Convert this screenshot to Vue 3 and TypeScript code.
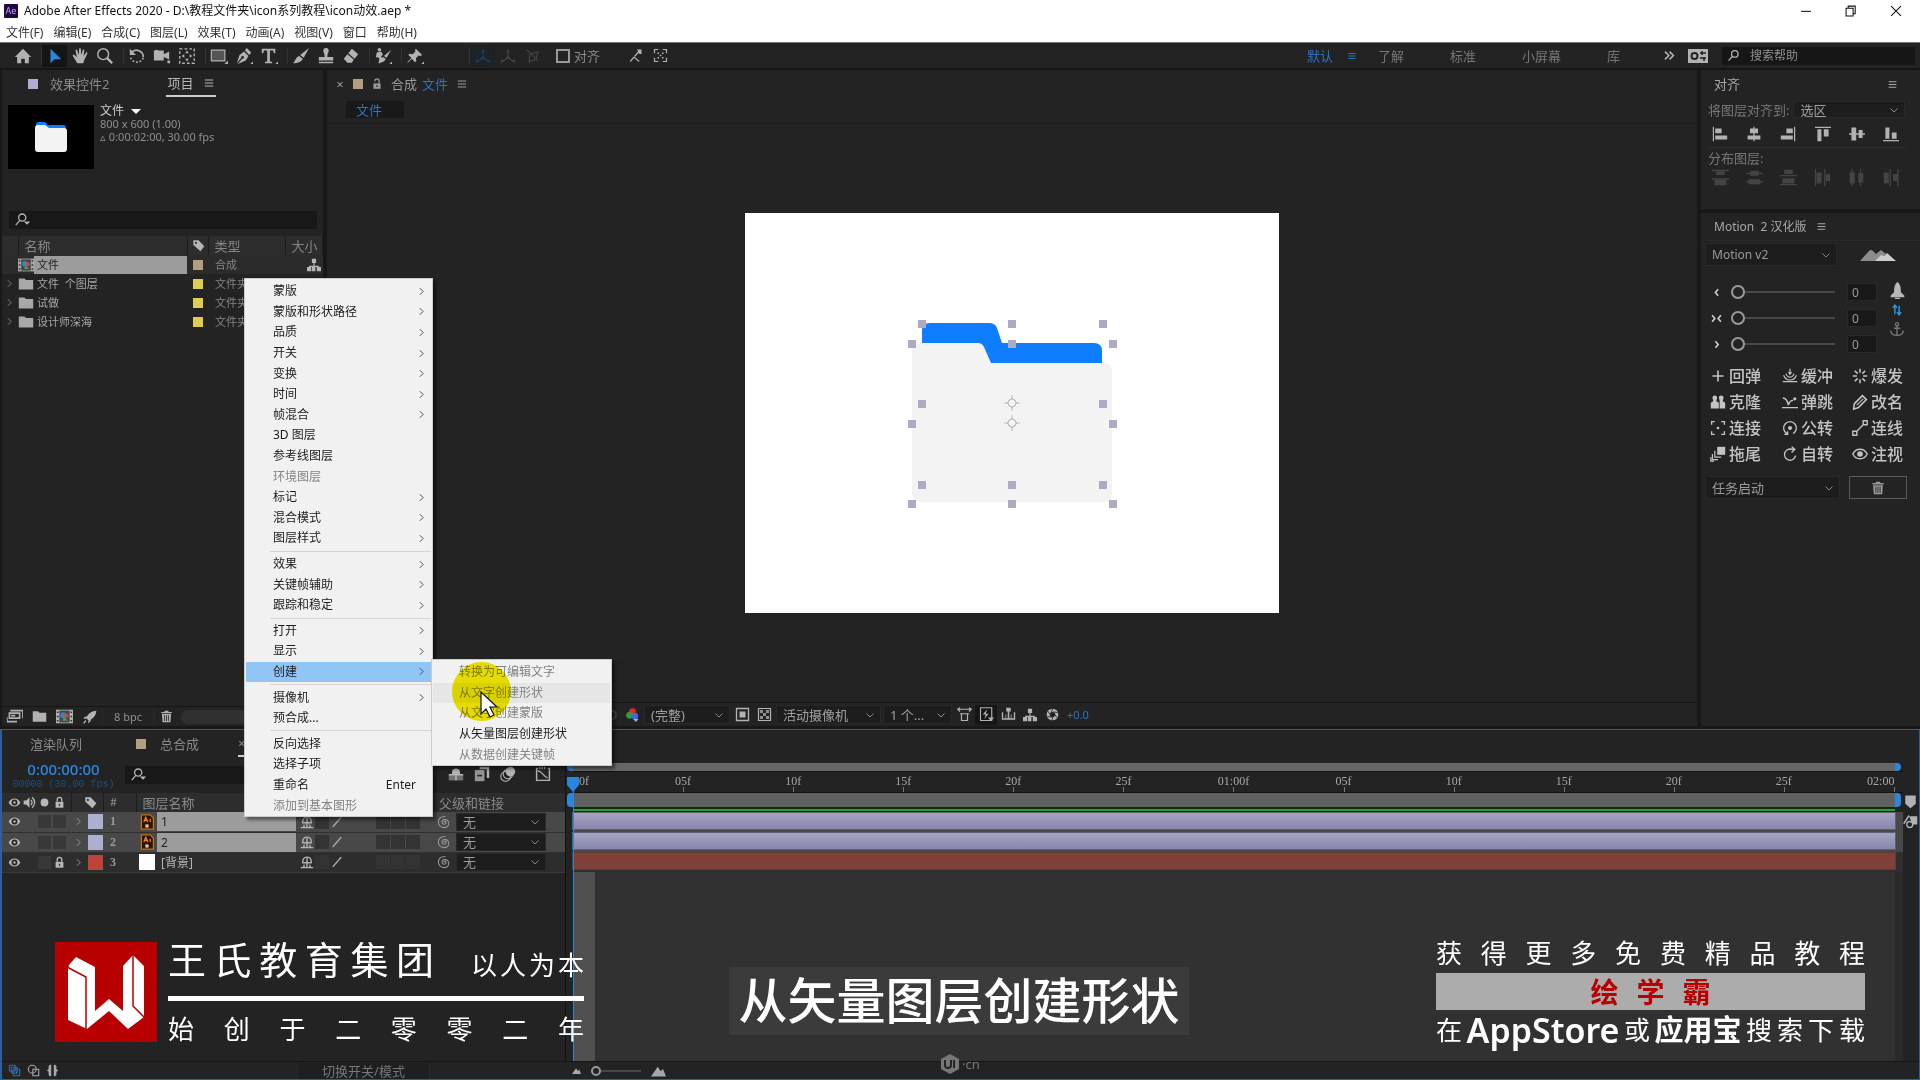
<script setup lang="ts">
import { h, ref } from 'vue'

const shapes: Record<string, string> = {
  home: '<path d="M10 2 1 11h2.500v7H8v-5h4v5h4.500v-7H19z"/>',
  select: '<path d="M5 2v16l4.500-4.500H17z"/>',
  hand: '<path d="M7 18 2 10c-.5-1.500 1-2 2-1l2.500 2.500L5 4c0-1.500 1.600-1.500 2 0l1.500 5L9 2.500c0-1.500 2-1.500 2 0l.3 6.500L13 3.500c.4-1.300 2-1 1.800.4L14 10l2.600-3.600c.8-1 2-.3 1.600.8L15 14l-1.500 4z"/>',
  zoom: '<g fill="none" stroke="currentColor"><circle cx="8" cy="8" r="6" stroke-width="1.600"/><path d="m12 12 6 6" stroke-width="2.600"/></g>',
  rotate: '<g fill="none" stroke="currentColor" stroke-width="1.800"><path d="M4 6a7.500 7.500 0 0 1 13 5"/><path d="M17 12A7.500 7.500 0 0 1 3 12" stroke-dasharray="2 2"/></g><path d="M2 2v7h7z"/>',
  camera: '<path d="M1 4h11v4l6-3v9l-6-3v4H1zM16 15h3v3h-3z"/><circle cx="4" cy="5" r="2"/>',
  pan: '<g fill="none" stroke="currentColor" stroke-width="1.500"><rect x="2" y="2" width="16" height="16" stroke-dasharray="3 2.300"/></g><path d="m10 4 2 3H8zM10 16l2-3H8zM4 10l3-2v4zM16 10l-3-2v4z"/>',
  rect: '<path d="M1.500 3.500h15v12h-15z" fill="#555" stroke="currentColor" stroke-width="1.300"/><path d="M20 15v4h-4z"/>',
  pen: '<path d="m13 1 5 5-2 3-5-5zM10 5l5 5-3 5-9 4 5-6a1.500 1.500 0 1 0-1-1l-5 6 3-9zM20 16v3h-3z"/>',
  type: '<path d="M2 2h15v5h-1.500L14.500 4H11v12l2.500.5V18h-8v-1.500L8 16V4H4.500l-1 3H2zM20 16v3h-3z"/>',
  brush: '<path d="m19 1-6 11-4-3zM8 10l4 3c-2 4-6 5-11 5 3-2 3-7 7-8z"/>',
  stamp: '<path d="M7 4a3 3 0 1 1 6 0c0 2-1.500 3-1.500 7H18v4H2v-4h6.500C8.500 7 7 6 7 4zM2 16.500h16V18H2z"/>',
  eraser: '<path d="m11 2 7 6-4 5-7-6zM6 8l7 6-2 3.500H6L2 13z"/>',
  roto: '<circle cx="6" cy="3" r="2"/><path d="m3 6 5-1 2 4-2 1 1 3-2 5H5l1-5-2-2-2 1zM19 3l-5 9-3-2zM10 11l3 2c-1 3-3 4-6 4 2-2 1-5 3-6zM20 16v3h-3z"/>',
  pin: '<path d="m11 2 7 7-2 1-2-.5-3 3 .5 3L10 17l-3.500-4L2 17.500l-.5-.5L6 12 2.500 9 4 7.500l3.500.5 3-3L10 3zM20 16v3h-3z"/>',
  axis: '<g fill="none" stroke="currentColor" stroke-width="1.500"><path d="M10 4v8m0 0-7 5m7-5 7 5"/></g><path d="m10 1 2 4H8zM1 18l1-4 3 3zM19 18l-1-4-3 3z"/><circle cx="10" cy="12" r="2"/>',
  axisview: '<g fill="none" stroke="currentColor" stroke-width="1.500"><path d="M2 2 16 16M6 8l10-3-2 9-9 3z"/></g>',
  edge: '<g fill="none" stroke="currentColor" stroke-width="1.600"><path d="M3 18 8 12l7 6M9 11l6-7"/></g><path d="M12 2h6v6h-3z"/>',
  corners: '<path d="M2 7V2h5M13 2h5v5M18 13v5h-5M7 18H2v-5" fill="none" stroke="currentColor" stroke-width="1.600"/><path d="M6 6h2v2H6zM12 6h2v2h-2zM6 12h2v2H6zM12 12h2v2h-2zM9 9h2v2H9z"/>',
  more: '<path d="m3 4 6 6-6 6M10 4l6 6-6 6" fill="none" stroke="currentColor" stroke-width="2.500"/>',
  workspace: '<path d="M0 3h20v14H0z"/><circle cx="6.500" cy="10" r="3" fill="none" stroke="#232323" stroke-width="2"/><path d="M12 7h6M12 12h6M14 5v4M16 11v4" stroke="#232323" stroke-width="1.500"/>',
  search: '<g fill="none" stroke="currentColor" stroke-width="2"><circle cx="12" cy="7.500" r="5"/><path d="m8.500 11-6 7"/></g>',
  searchdrop: '<g fill="none" stroke="currentColor" stroke-width="1.600"><circle cx="9" cy="7" r="4.500"/><path d="m6 10.500-5 6"/></g><path d="M11 12h8l-4 4z"/>',
  burger: '<path d="M3 4h14v2H3zM3 9h14v2H3zM3 14h14v2H3z"/>',
  lock: '<path d="M4 9h12v9H4z"/><path d="M6.500 9V5.500a3.500 3.500 0 0 1 7 0V9" fill="none" stroke="currentColor" stroke-width="2"/><path d="M9 12h2v3H9z" fill="#232323"/>',
  unlock: '<path d="M4 9h12v9H4z"/><path d="M6.500 6V5a3.500 3.500 0 0 1 7 0v4" fill="none" stroke="currentColor" stroke-width="2"/><path d="M9 12h2v3H9z" fill="#232323"/>',
  tag: '<path d="M2 2h8l9 9-6 8L2 9z"/><circle cx="6" cy="6" r="1.600" fill="#2d2d2d"/>',
  folder: '<path d="M1 3h7l2 2h9v12H1z"/>',
  comp: '<path d="M0 2h20v16H0z"/><path d="M4 3h12v14H4z" fill="#444"/><circle cx="8.500" cy="8.500" r="3.500" fill="#3987b8"/><circle cx="12.500" cy="9" r="2.500" fill="#c64b3c"/><path d="m7 15 3-5 4 5z" fill="#4d9a56"/><path d="M1 4h2v2H1zM1 9h2v2H1zM1 14h2v2H1zM17 4h2v2h-2zM17 9h2v2h-2zM17 14h2v2h-2z" fill="#333"/>',
  flow: '<path d="M7 1h6v6H7zM0 13h6v6H0zM14 13h6v6h-6zM7 13h5v6H7zM9.200 7h1.600v4H17v2H3v-2h6.200z"/>',
  chev: '<path d="m7 4 6 6-6 6" fill="none" stroke="currentColor" stroke-width="1.700"/>',
  down: '<path d="m3 7 7 7 7-7" fill="none" stroke="currentColor" stroke-width="1.700"/>',
  interpret: '<path d="M5 2h15v10h-1V4H5z"/><path fill-rule="evenodd" d="M3 5h14v8H3zm2 2v4h10V7zM1 11h1v4h11v2H1z"/><path d="M6 8h5v2H6z"/>',
  rocketside: '<path d="M19 1C13 1 8 5 6 9l-4 1-1 3 4-1 3 3-1 4 3-2 2-4c4-2 7-7 7-12z"/><path d="m4 15-3 4" stroke="currentColor" stroke-width="2"/>',
  trash: '<path d="M7 1h6v2h5v2H2V3h5zM3 6h14l-1 13H4z"/><path d="M7 8v9M10 8v9M13 8v9" stroke="#232323" stroke-width="1.300"/>',
  eye: '<path d="M1 10c4-8 14-8 18 0-4 8-14 8-18 0z"/><circle cx="10" cy="10" r="4.500" fill="#262626"/><circle cx="10" cy="10" r="1.800"/>',
  speaker: '<path d="M1 7h4l5-5v16l-5-5H1z"/><path d="M12 6q4 4 0 8M14 2q8 8 0 16" fill="none" stroke="currentColor" stroke-width="2"/>',
  dot: '<circle cx="10" cy="10" r="6"/>',
  shy: '<path d="M4 9a6 6 0 0 1 12 0v2H4z" fill="none" stroke="currentColor" stroke-width="2"/><path d="M9 4h2v15H9zM1 17h18v2H1zM6 12l-2 5h3zM14 12l2 5h-3z"/>',
  hide: '<path d="M1 11h18v7H1z" opacity=".55"/><path d="M5 8a5 5 0 0 1 10 0v2h4v2H1v-2h4zM9 11h2v7H9z"/>',
  blend: '<path d="M7 1h12v14h-3V4H7z"/><path d="M1 5h12v14H1z" opacity=".8"/><path d="M4 11h6v2H4z" fill="#222"/>',
  blur: '<circle cx="13" cy="7" r="6"/><g fill="none" stroke="currentColor" stroke-width="1.300"><circle cx="10" cy="10" r="6"/><circle cx="7" cy="13" r="6"/></g>',
  graph: '<path d="M2 3v15h16V3M1 3h3M16 3h3" fill="none" stroke="currentColor" stroke-width="1.800"/><path d="M3 6c7 0 7 8 13 9M6 1v3M9 1v3M12 1v3" fill="none" stroke="currentColor" stroke-width="1.500"/>',
  slash: '<path d="M4 17 16 3" stroke="currentColor" stroke-width="2"/>',
  spiral: '<path d="M10 11c-1-3 3-3 3 0s-6 3-6-1 7-5 9-1 0 9-5 9-9-3-9-8 4-8 10-8" fill="none" stroke="currentColor" stroke-width="1.500"/>',
  rgb: '<circle cx="10" cy="6" r="4.500" fill="#e02b20"/><circle cx="6" cy="11" r="4.500" fill="#2f9a3e"/><circle cx="13" cy="12" r="4.500" fill="#4666e0"/><path d="M11 16h7l-3.500 4z"/>',
  roi: '<path d="M2 2h16v16H2z" fill="none" stroke="currentColor" stroke-width="1.800"/><path d="M6 6h8v8H6z"/>',
  checker: '<path d="M2 2h16v16H2z" fill="none" stroke="currentColor" stroke-width="1.600"/><path d="M4 4h4v4H4zM12 4h4v4h-4zM8 8h4v4H8zM4 12h4v4H4zM12 12h4v4h-4z" opacity=".75"/>',
  aspect: '<path d="M1 3h18M4 1 1 3l3 3M16 1l3 2-3 3M6 9h8v9H6zM4 9h12" fill="none" stroke="currentColor" stroke-width="1.600"/>',
  fast: '<path d="M2 1h15v17H2z" fill="none" stroke="currentColor" stroke-width="1.500"/><path d="m11 3-6 7h4l-2 6 6-7H9zM12 14h8l-4 5z"/>',
  tline: '<path d="M2 7v9h16V7" fill="none" stroke="currentColor" stroke-width="1.800"/><path d="M7 1h6v5H7zM9 6h2v10H9zM6 10h1v6H6zM13 10h1v6h-1z"/>',
  shutter: '<circle cx="10" cy="10" r="6.500" fill="none" stroke="currentColor" stroke-width="5"/><path d="m10 1-2 7M18 7l-7-1M17 15l-4-6M9 19l2-7M2 13l7 1M3 5l4 6" stroke="#232323" stroke-width="1.300"/>',
  snap: '<circle cx="8" cy="10" r="6" fill="none" stroke="currentColor" stroke-width="3"/>',
  hills: '<path d="M0 18 9 5l4 6 3-3 4 10z"/>',
  layers: '<g fill="none" stroke="currentColor" stroke-width="1.500"><path d="M2 2h9v9H2z"/><path d="M5 5h9v9H5z"/><path d="M8 8h10v10H8z"/></g><path d="M12 11h2v4h-2z"/>',
  modes: '<g fill="none" stroke="currentColor" stroke-width="1.700"><circle cx="8" cy="8" r="6"/><path d="M9 8h9v10H9z"/></g>',
  braces: '<path d="M8 1v18H6l-2-2v-5l-3-2 3-2V3l2-2zM12 1v18h2l2-2v-5l3-2-3-2V3l-2-2z"/>',
  marker: '<path d="M3 2h14v11l-7 6-7-6z"/>',
  keyframe: '<path d="M8 3h11v11h-6z"/><circle cx="9" cy="14" r="4" fill="none" stroke="currentColor" stroke-width="1.800"/><path d="M1 13 8 2" stroke="currentColor" stroke-width="2"/>',
  al: '<path d="M1 1h1.500v18H1zM4 3h8v6H4zM4 12h15v5H4z"/>',
  ac: '<path d="M9.200 1h1.600v18H9.200zM5 3h10v6H5zM2 12h16v5H2z"/>',
  ar: '<path d="M17.500 1H19v18h-1.500zM8 3h8v6H8zM1 12h15v5H1z"/>',
  at: '<path d="M0 1h20v1.500H0zM3 4h5v15H3zM11 4h6v9h-6z"/>',
  am: '<path d="M0 9.200h20v1.600H0zM3 2h6v16H3zM12 5h5v10h-5z"/>',
  ab: '<path d="M0 17.500h20V19H0zM3 2h5v14H3zM11 8h6v8h-6z"/>',
  d1: '<path d="M0 1h20v1.500H0zM5 3h10v4H5zM0 11h20v1.500H0zM3 13h14v6H3z"/>',
  d2: '<path d="M0 4.500h20V6H0zM5 2h10v6H5zM0 14.500h20V16H0zM3 12h14v6H3z"/>',
  d3: '<path d="M0 7h20v1.500H0zM5 1h10v5H5zM0 17.500h20V19H0zM3 11h14v6H3z"/>',
  d4: '<path d="M1 0h1.500v20H1zM3 4h6v13H3zM12 0h1.500v20H12zM14 6h5v8h-5z"/>',
  d5: '<path d="M4 0h1.500v20H4zM2 4h6v13H2zM14 0h1.500v20H14zM12 5h6v11h-6z"/>',
  d6: '<path d="M9 0h1.500v20H9zM2 4h6v13H2zM18 0h1.500v20H18zM13 6h5v8h-5z"/>',
  eleft: '<path d="m13 4-5 6 5 6" fill="none" stroke="currentColor" stroke-width="3"/>',
  eboth: '<path d="m2 4 5 6-5 6M18 4l-5 6 5 6" fill="none" stroke="currentColor" stroke-width="3"/>',
  eright: '<path d="m8 4 5 6-5 6" fill="none" stroke="currentColor" stroke-width="3"/>',
  rocket: '<path d="M10 0c4 3 4 8 4 12l4 4v2H2v-2l4-4C6 8 6 3 10 0zM7 18.500h6V20H7z"/>',
  swap: '<path d="M7 16V3M13 4v13M4 7l3-4 3 4M10 13l3 4 3-4" fill="none" stroke="currentColor" stroke-width="2"/>',
  anchor: '<g fill="none" stroke="currentColor" stroke-width="1.700"><circle cx="10" cy="4" r="2"/><path d="M10 6v12M6 9h8M2 12c1 8 15 8 16 0"/></g>',
  plus: '<path d="M9 3h2v6h6v2h-6v6H9v-6H3V9h6z"/>',
  ease: '<path d="M1 17h18M2 9c3 8 13 8 16 0M5 7c2 6 8 6 10 0M8 5l2 3 2-3M10 1v6" fill="none" stroke="currentColor" stroke-width="1.500"/>',
  burst: '<path d="M10 1v5M10 14v5M1 10h5M14 10h5M3.500 3.500 7 7M13 13l3.500 3.500M16.500 3.500 13 7M7 13l-3.500 3.500" stroke="currentColor" stroke-width="2"/>',
  clone: '<circle cx="6" cy="5" r="3"/><circle cx="14" cy="5" r="3"/><path d="M4 7h4v2l3 2v7H1v-7l3-2zM12 7h4v2l3 2v7h-7z"/>',
  bounce: '<path d="M0 17h20M1 5c4 0 6 4 7 9 1-4 3-6 6-6" fill="none" stroke="currentColor" stroke-width="1.800"/><circle cx="16" cy="6" r="2"/>',
  pencil: '<path d="m3 12 10-10 5 5L8 17l-6 2z" fill="none" stroke="currentColor" stroke-width="2"/><path d="m6 14 8-8" stroke="currentColor" stroke-width="1.500"/>',
  target: '<path d="M2 6V2h4M14 2h4v4M18 14v4h-4M6 18H2v-4" fill="none" stroke="currentColor" stroke-width="1.700"/><circle cx="10" cy="10" r="1.700"/>',
  orbit: '<path d="M6 17A8 8 0 1 1 14 17M3 18h4v-4" fill="none" stroke="currentColor" stroke-width="1.700"/><circle cx="10" cy="10" r="2.500"/>',
  rope: '<path d="M1 14h5v5H1zM14 1h5v5h-5zM6 14l8-8" fill="none" stroke="currentColor" stroke-width="1.700"/>',
  trail: '<path d="M9 1h10v10H9z"/><path d="M6 6v8h8M3 10v7h7M1 14v5h4" fill="none" stroke="currentColor" stroke-width="1.500"/>',
  spin: '<path d="M12 4a7 7 0 1 0 5 8M8 4h7M12 1l4 3-4 4" fill="none" stroke="currentColor" stroke-width="1.700"/>',
  look: '<path d="M1 10c4-8 14-8 18 0-4 8-14 8-18 0z" fill="none" stroke="currentColor" stroke-width="1.800"/><circle cx="10" cy="10" r="3.500"/>',
  min: '<path d="M3 10.500h14" stroke="currentColor" stroke-width="1.500"/>',
  restore: '<path d="M3 6h10v11H3zM6 6V3h10v11h-3" fill="none" stroke="currentColor" stroke-width="1.500"/>',
  close: '<path d="m3 3 14 14M17 3 3 17" stroke="currentColor" stroke-width="1.500"/>',
  ai: '<path d="M3 1h11l4 4v14H3z" fill="#2b1500" stroke="#c8701c" stroke-width="1.500"/><path d="m6 10 2.500-6L11 10M7 8h3M14 6v4" fill="none" stroke="#f08a24" stroke-width="1.500"/><path d="M8 13h4v4H8z" fill="#e8c9a0"/>',
}

const Icon = (props: { name: string; size?: number }) =>
  h('svg', {
    viewBox: '0 0 20 20',
    width: props.size ?? 16,
    height: props.size ?? 16,
    fill: 'currentColor',
    'aria-hidden': 'true',
    innerHTML: shapes[props.name],
  })
Icon.props = ['name', 'size']

const menus = ['文件(F)', '编辑(E)', '合成(C)', '图层(L)', '效果(T)', '动画(A)', '视图(V)', '窗口', '帮助(H)']
const toolGroups = [
  [['home', '主页']],
  [['select', '选取'], ['hand', '手形'], ['zoom', '缩放']],
  [['rotate', '旋转'], ['camera', '摄像机'], ['pan', '锚点']],
  [['rect', '矩形'], ['pen', '钢笔'], ['type', '文字']],
  [['brush', '画笔'], ['stamp', '仿制图章'], ['eraser', '橡皮擦']],
  [['roto', 'Roto 笔刷']],
  [['pin', '操控点']],
]
const workspaces = ['了解', '标准', '小屏幕', '库']

const items = [
  { name: '文件', icon: 'comp', kind: '合成', color: '#b29f82', active: true },
  { name: '文件  个图层', icon: 'folder', kind: '文件夹', color: '#e0cd4f' },
  { name: '试做', icon: 'folder', kind: '文件夹', color: '#e0cd4f' },
  { name: '设计师深海', icon: 'folder', kind: '文件夹', color: '#e0cd4f' },
]

const aligns = ['al', 'ac', 'ar', 'at', 'am', 'ab']
const spreads = ['d1', 'd2', 'd3', 'd4', 'd5', 'd6']
const easing = ref([
  { icon: 'eleft', label: '缓入', value: 0 },
  { icon: 'eboth', label: '缓动', value: 0 },
  { icon: 'eright', label: '缓出', value: 0 },
])
const motions = [
  ['plus', '回弹'], ['ease', '缓冲'], ['burst', '爆发'],
  ['clone', '克隆'], ['bounce', '弹跳'], ['pencil', '改名'],
  ['target', '连接'], ['orbit', '公转'], ['rope', '连线'],
  ['trail', '拖尾'], ['spin', '自转'], ['look', '注视'],
]

type Entry = { t?: string; sub?: boolean; off?: boolean; key?: string; on?: boolean }
const sub = (t: string): Entry => ({ t, sub: true })
const context: Entry[] = [
  sub('蒙版'), sub('蒙版和形状路径'), sub('品质'), sub('开关'), sub('变换'), sub('时间'), sub('帧混合'),
  { t: '3D 图层' }, { t: '参考线图层' }, { t: '环境图层', off: true },
  sub('标记'), sub('混合模式'), sub('图层样式'), {},
  sub('效果'), sub('关键帧辅助'), sub('跟踪和稳定'), {},
  sub('打开'), sub('显示'), { t: '创建', sub: true, on: true }, {},
  sub('摄像机'), { t: '预合成...' }, {},
  { t: '反向选择' }, { t: '选择子项' }, { t: '重命名', key: 'Enter' }, { t: '添加到基本图形', off: true },
]
const submenu: Entry[] = [
  { t: '转换为可编辑文字', off: true },
  { t: '从文字创建形状', off: true, on: true },
  { t: '从文字创建蒙版', off: true },
  { t: '从矢量图层创建形状' },
  { t: '从数据创建关键帧', off: true },
]

const layers = [
  { n: 1, name: '1', color: '#b0aed0', active: true },
  { n: 2, name: '2', color: '#b0aed0', active: true },
  { n: 3, name: '[背景]', color: '#c0433a', locked: true },
]
const ticks = ['00f', '05f', '10f', '15f', '20f', '25f', '01:00f', '05f', '10f', '15f', '20f', '25f']

const handles = [
  [177, 111], [267, 111], [358, 111], [177, 191], [358, 191], [177, 272], [267, 272], [358, 272],
  [167, 131], [267, 131], [368, 131], [167, 211], [368, 211], [167, 291], [267, 291], [368, 291],
]
</script>

<template>
  <div class="app">
    <header class="title">
      <svg class="ae" viewBox="0 0 14 14" width="14" height="14"><rect width="14" height="14" rx="1" fill="#1f0740" /><text x="7" y="10" text-anchor="middle" font-size="9" fill="#c9a0ff">Ae</text></svg>
      <h1>Adobe After Effects 2020 - D:\教程文件夹\icon系列教程\icon动效.aep *</h1>
      <button aria-label="最小化"><Icon name="min" :size="14" /></button>
      <button aria-label="还原"><Icon name="restore" :size="14" /></button>
      <button aria-label="关闭"><Icon name="close" :size="14" /></button>
    </header>
    <nav class="menubar"><button v-for="m in menus" :key="m">{{ m }}</button></nav>

    <div class="toolbar">
      <div v-for="(g, i) in toolGroups" :key="i" class="group">
        <button v-for="[icon, label] in g" :key="icon" :class="{ on: icon === 'select' }" :aria-label="label"><Icon :name="icon" :size="18" /></button>
      </div>
      <div class="group axes">
        <button aria-label="本地轴" class="local"><Icon name="axis" /></button>
        <button aria-label="世界轴"><Icon name="axis" /></button>
        <button aria-label="视图轴"><Icon name="axisview" /></button>
      </div>
      <label class="snap"><input type="checkbox" />对齐</label>
      <button aria-label="边缘对齐"><Icon name="edge" :size="15" /></button>
      <button aria-label="角点对齐"><Icon name="corners" :size="15" /></button>
      <div class="spaces">
        <button class="current">默认</button>
        <button class="current burger" aria-label="工作区菜单"><Icon name="burger" :size="10" /></button>
        <button v-for="w in workspaces" :key="w">{{ w }}</button>
        <button class="more" aria-label="更多"><Icon name="more" :size="13" /></button>
      </div>
      <button class="wsicon" aria-label="工作区设置"><Icon name="workspace" :size="20" /></button>
      <label class="help"><Icon name="search" :size="13" /><input placeholder="搜索帮助" aria-label="搜索帮助" /></label>
    </div>

    <main class="upper">
      <section class="panel project">
        <div class="tabs">
          <i class="swatch lilac"></i><button class="tab">效果控件2</button>
          <button class="tab active">项目<Icon name="burger" :size="12" /></button>
        </div>
        <div class="info">
          <svg class="thumb" viewBox="0 0 86 64" width="86" height="64"><rect width="86" height="64" fill="#000" /><path d="M28 20q0-3 3-3h6l3 3h15q3 0 3 3v5H28z" fill="#0f7dff" /><path d="M27 23q0-3 3-3h7l4 3h15q3 0 3 3v18q0 3-3 3H30q-3 0-3-3z" fill="#f3f3f3" /></svg>
          <div>
            <strong>文件 <span class="tri"></span></strong>
            <p>800 x 600 (1.00)</p>
            <p>▵ 0:00:02:00, 30.00 fps</p>
          </div>
        </div>
        <label class="find"><Icon name="searchdrop" /><input aria-label="搜索项目" /></label>
        <table class="items">
          <colgroup><col class="c1" /><col class="c2" /><col class="c3" /><col class="c4" /><col /></colgroup>
          <thead><tr><th></th><th>名称</th><th><Icon name="tag" :size="13" /></th><th>类型</th><th>大小</th></tr></thead>
          <tbody>
            <tr v-for="it in items" :key="it.name" :class="{ active: it.active }">
              <td class="twist"><Icon v-if="!it.active" name="chev" :size="11" /></td>
              <td><div class="entry"><Icon :name="it.icon" /><span>{{ it.name }}</span></div></td>
              <td><i class="swatch" :style="{ background: it.color }"></i></td>
              <td>{{ it.kind }}</td>
              <td><Icon v-if="it.active" name="flow" :size="14" /></td>
            </tr>
          </tbody>
        </table>
        <footer class="projfoot">
          <button aria-label="解释素材"><Icon name="interpret" :size="17" /></button>
          <button aria-label="新建文件夹"><Icon name="folder" :size="15" /></button>
          <button aria-label="新建合成"><Icon name="comp" :size="17" /></button>
          <button aria-label="项目设置"><Icon name="rocketside" :size="14" /></button>
          <button class="bpc">8 bpc</button>
          <button aria-label="删除"><Icon name="trash" :size="13" /></button>
          <span class="pill"></span>
        </footer>
      </section>

      <section class="panel comp">
        <div class="tabs">
          <button class="x" aria-label="关闭标签">×</button><i class="swatch tan"></i>
          <Icon name="unlock" :size="12" />
          <button class="tab">合成 <span>文件</span></button>
          <Icon name="burger" :size="12" />
        </div>
        <div class="crumbs"><button>文件</button></div>
        <div class="viewer">
          <svg viewBox="0 0 534 400" width="534" height="400">
            <rect width="534" height="400" fill="#fff" />
            <path d="M177 130v-12q0-8 8-8h59q6 0 8 5l5 15h92q8 0 8 8v12H177z" fill="#0f7dff" />
            <path d="M167 138q0-8 8-8h58q4 0 6 4l7 16h113q8 0 8 8v123q0 8-8 8H175q-8 0-8-8z" fill="#f3f3f3" />
            <rect v-for="([x, y], i) in handles" :key="i" :x="x - 4" :y="y - 4" width="8" height="8" fill="#aeaac4" />
            <g v-for="y in [190, 210]" :key="y" fill="none" stroke="#bbb8c2">
              <circle cx="267" :cy="y" r="4" /><path :d="`M267 ${y - 8}v4m0 8v4M259 ${y}h4m8 0h4M267 ${y - 5}l5 5-5 5-5-5z`" />
            </g>
          </svg>
        </div>
        <footer class="compfoot">
          <span class="ghost"><Icon name="snap" :size="14" /></span>
          <button aria-label="通道"><Icon name="rgb" :size="15" /></button>
          <span class="sel s1"><select aria-label="分辨率"><option>(完整)</option></select><Icon name="down" :size="10" /></span>
          <button aria-label="目标区域"><Icon name="roi" :size="15" /></button>
          <button aria-label="透明网格"><Icon name="checker" :size="15" /></button>
          <span class="sel s2"><select aria-label="视图"><option>活动摄像机</option></select><Icon name="down" :size="10" /></span>
          <span class="sel s3"><select aria-label="视图数"><option>1 个...</option></select><Icon name="down" :size="10" /></span>
          <button aria-label="像素长宽比"><Icon name="aspect" :size="15" /></button>
          <button aria-label="快速预览" class="pressed"><Icon name="fast" :size="15" /></button>
          <button aria-label="时间轴"><Icon name="tline" :size="15" /></button>
          <button aria-label="流程图"><Icon name="flow" :size="14" /></button>
          <button aria-label="重置曝光度"><Icon name="shutter" :size="13" /></button>
          <button class="expo">+0.0</button>
        </footer>
      </section>

      <aside class="side">
        <section class="panel align">
          <div class="head"><h2>对齐</h2><Icon name="burger" :size="11" /></div>
          <div class="to"><label for="alignTo">将图层对齐到:</label>
            <span class="sel"><select id="alignTo"><option>选区</option></select><Icon name="down" :size="10" /></span></div>
          <div class="icons"><button v-for="a in aligns" :key="a" :aria-label="a"><Icon :name="a" /></button></div>
          <p>分布图层:</p>
          <div class="icons off"><button v-for="a in spreads" :key="a" :aria-label="a" disabled><Icon :name="a" :size="17" /></button></div>
        </section>
        <section class="panel motion">
          <div class="head start"><h2>Motion&nbsp; 2 汉化版</h2><Icon name="burger" :size="11" /></div>
          <div class="preset">
            <span class="sel"><select aria-label="脚本版本"><option>Motion v2</option></select><Icon name="down" :size="10" /></span>
            <svg viewBox="0 0 36 12" width="36" height="12"><path d="M0 12 9 2q2-2 4 0l3 3 5-4 5 4-8 7z" fill="#8c8c8c" /><path d="m15 12 6-6 3 1 3-3 9 8z" fill="#ccc" /></svg>
          </div>
          <div class="ease">
            <div class="rows">
              <div v-for="e in easing" :key="e.icon" class="row">
                <Icon :name="e.icon" :size="11" />
                <input v-model.number="e.value" type="range" min="0" max="100" :aria-label="e.label" />
                <input v-model.number="e.value" type="text" :aria-label="e.label" />
              </div>
            </div>
            <div class="tools">
              <button aria-label="启动"><Icon name="rocket" :size="17" /></button>
              <button aria-label="交换" class="blue"><Icon name="swap" :size="14" /></button>
              <button aria-label="锚点" class="dim"><Icon name="anchor" /></button>
            </div>
          </div>
          <div class="grid"><button v-for="[icon, label] in motions" :key="label"><Icon :name="icon" />{{ label }}</button></div>
          <div class="task">
            <span class="sel"><select aria-label="任务"><option>任务启动</option></select><Icon name="down" :size="10" /></span>
            <button aria-label="删除任务"><Icon name="trash" :size="14" /></button>
          </div>
        </section>
      </aside>
    </main>

    <section class="timeline">
      <div class="left">
        <div class="tabs">
          <button class="tab queue">渲染队列</button>
          <i class="swatch tan"></i><button class="tab">总合成</button>
          <button class="tab active">×&nbsp; 文件</button>
        </div>
        <div class="clock">
          <div class="time"><b>0:00:00:00</b><small>00000 (30.00 fps)</small></div>
          <label class="find"><Icon name="searchdrop" /><input aria-label="搜索图层" /></label>
          <div class="modes"><Icon name="hide" /><Icon name="blend" /><Icon name="blur" /><Icon name="graph" /></div>
        </div>
        <table class="layers">
          <colgroup><col class="l1" /><col class="l2" /><col class="l3" /><col class="l4" /><col class="l5" /><col /></colgroup>
          <thead>
            <tr>
              <th><div class="sw"><Icon name="eye" :size="13" /><Icon name="speaker" :size="13" /><Icon name="dot" :size="13" /><Icon name="lock" :size="13" /></div></th>
              <th class="tagcell"><Icon name="tag" :size="13" /></th><th class="num">#</th><th class="lname">图层名称</th><th></th><th class="parent">父级和链接</th>
            </tr>
          </thead>
          <tbody>
            <tr v-for="l in layers" :key="l.n" :class="{ active: l.active }">
              <td><div class="sw"><Icon name="eye" :size="13" /><span></span><i></i><Icon v-if="l.locked" name="lock" :size="13" /><i v-else></i></div></td>
              <td><div class="mark"><Icon name="chev" :size="11" /><i :style="{ background: l.color }"></i></div></td>
              <td class="num">{{ l.n }}</td>
              <td><div class="name"><Icon v-if="l.active" name="ai" /><i v-else></i><span>{{ l.name }}</span></div></td>
              <td><div class="switches"><Icon name="shy" :size="14" /><i></i><Icon name="slash" :size="14" /><i class="first"></i><i></i><i></i></div></td>
              <td><div class="link"><Icon name="spiral" :size="14" /><span class="sel"><select aria-label="父级"><option>无</option></select><Icon name="down" :size="10" /></span></div></td>
            </tr>
          </tbody>
        </table>
      </div>

      <div class="right">
        <div class="navbar"><i></i></div>
        <div class="ruler"><span v-for="(t, i) in ticks" :key="i"><em>{{ t }}</em></span><span class="last"><em>02:00</em></span></div>
        <div class="work"><i></i></div>
        <div class="cache"></div>
        <div class="tracks">
          <div v-for="l in layers" :key="l.n" class="track" :class="{ active: l.active }"><div></div></div>
          <div class="rest"></div>
        </div>
        <svg class="head" viewBox="0 0 12 15" width="12" height="15"><path d="M0 0h12v8l-6 7-6-7z" fill="#2d86dd" /></svg>
        <div class="needle"></div>
      </div>
      <div class="gutter"><Icon name="marker" :size="15" /><Icon name="keyframe" :size="15" /></div>

      <footer class="tlfoot">
        <button class="blue" aria-label="图层开关"><Icon name="layers" :size="13" /></button>
        <button aria-label="转换控制"><Icon name="modes" :size="13" /></button>
        <button aria-label="入出点"><Icon name="braces" :size="13" /></button>
        <button class="toggle">切换开关/模式</button>
        <Icon name="hills" :size="9" />
        <input type="range" value="0" aria-label="时间缩放" />
        <Icon name="hills" :size="15" />
      </footer>
    </section>

    <div class="menu context" role="menu">
      <template v-for="(c, i) in context" :key="i">
        <button v-if="c.t" role="menuitem" :class="{ off: c.off, on: c.on }">{{ c.t }}<Icon v-if="c.sub" name="chev" :size="11" /><kbd v-if="c.key">{{ c.key }}</kbd></button>
        <hr v-else />
      </template>
    </div>
    <div class="menu fly" role="menu">
      <button v-for="c in submenu" :key="c.t" role="menuitem" :class="{ off: c.off, hover: c.on }">{{ c.t }}</button>
    </div>
    <div class="spot"></div>
    <svg class="cursor" viewBox="0 0 18 28" width="18" height="28"><path d="M1 1v22l5-5 4 8 4-2-4-8h7z" fill="#fff" stroke="#111" stroke-width="1.200" /></svg>

    <div class="brand">
      <svg viewBox="0 0 102 100" width="102" height="100">
        <rect width="102" height="100" fill="#b80000" />
        <path d="m14 23 7-8 19 10v44l14-12 14 12V24l10-11 11 11v51L73 87 54 69 32 87l-19-9V26z" fill="#fff" />
        <path d="m12 25 19 10v53M78 12v52l12 12" fill="none" stroke="#b80000" stroke-width="1.500" />
      </svg>
      <div class="words">
        <div class="line1"><span class="org">王氏教育集团</span><span class="motto">以人为本</span></div>
        <hr />
        <p>始创于二零零二年</p>
      </div>
    </div>
    <div class="caption">从矢量图层创建形状</div>
    <div class="promo">
      <p>获得更多免费精品教程</p>
      <div><span>绘学霸</span></div>
      <p class="store">在<b class="latin">AppStore</b>或<b>应用宝</b><span>搜索下载</span></p>
    </div>
    <div class="water"><svg viewBox="0 0 20 20" width="20" height="20"><path d="m10 0 9 5v10l-9 5-9-5V5z" fill="#777" /><path d="M5 6v5q0 3 3 3t3-3V6M14 6v8" fill="none" stroke="#252525" stroke-width="2" /></svg>·cn</div>
  </div>
</template>

<style>
body { margin: 0; background: #181818; }
</style>

<style scoped>
.app { position: relative; height: 100vh; overflow: hidden; display: grid; grid-template-rows: 23px 20px 27px minmax(0, 659fr) minmax(0, 351fr); background: #181818; color: #9a9a9a; font: 12px/16px "Noto Sans", "Noto Sans CJK SC", sans-serif; }
.app * { box-sizing: border-box; }
button, input, select { font: inherit; color: inherit; background: none; border: 0; padding: 0; margin: 0; outline: 0; appearance: none; }
button { display: inline-flex; align-items: center; justify-content: center; white-space: nowrap; }
h1, h2, p, hr { margin: 0; font: inherit; }
svg { flex: none; display: block; }
i { display: block; flex: none; }
table { border-collapse: collapse; table-layout: fixed; width: 100%; }
th, td { padding: 0; font-weight: 400; text-align: left; overflow: hidden; white-space: nowrap; }
.panel { background: #232323; display: flex; flex-direction: column; min-width: 0; }
.swatch { width: 10px; height: 10px; background: #b29f82; }
.lilac { background: #b0aed0; }
.sel { position: relative; display: flex; background: #1d1d1d; border: 1px solid #292929; }
.sel select { width: 100%; padding-left: 6px; }
.sel svg { position: absolute; right: 5px; top: 50%; margin-top: -5px; pointer-events: none; }
.find { display: flex; align-items: center; background: #181818; color: #b5b5b5; height: 18px; padding-left: 6px; }
.find input { flex: 1; min-width: 0; }

.title { display: flex; align-items: center; background: #fff; color: #111; padding: 0 2px 1px 4px; }
.title h1 { flex: 1; margin-left: 6px; font-size: 12px; }
.title button { width: 45px; height: 20px; }
.menubar { display: flex; gap: 10px; padding: 0 6px; background: #fff; color: #333; align-items: center; border-bottom: 1px solid #777; }

.toolbar { display: flex; align-items: center; background: #232323; border-bottom: 2px solid #151515; padding-left: 10px; color: #b2b2b2; }
.toolbar > button { width: 25px; }
.group { display: flex; margin-right: 7px; }
.group button { width: 25px; height: 22px; }
.group .on { background: #151515; color: #2d86dd; }
.group + .group { box-shadow: -4px 0 0 -3px #333; }
.axes { margin-left: 36px; color: #444; }
.axes .local { color: #1f3f60; background: #1d2226; }
.snap { display: flex; align-items: center; gap: 4px; margin: 0 23px 0 4px; color: #8a8a8a; font-size: 13px; }
.snap input { width: 14px; height: 14px; border: 2px solid #999; }
.spaces { margin-left: auto; display: flex; color: #777; font-size: 13px; gap: 46px; align-items: center; }
.spaces .current { color: #2d74bd; }
.spaces .burger { margin: 0 -25px 0 -32px; }
.spaces .more { color: #b2b2b2; margin-left: -3px; }
.toolbar > .wsicon { margin: 0 12px 0 9px; }
.help { display: flex; align-items: center; gap: 10px; width: 193px; height: 18px; margin-right: 5px; padding-left: 5px; background: #161616; }
.help input { flex: 1; min-width: 0; }
.help input::placeholder { color: #8f8f8f; opacity: 1; }

.upper { display: grid; grid-template-columns: 321px minmax(0, 1fr) 219px; gap: 4px; padding: 0 0 3px 2px; min-height: 0; }
.tabs { display: flex; align-items: center; height: 28px; flex: none; font-size: 13px; color: #8a8a8a; }
.tab { height: 26px; }
.project .tabs { padding-left: 26px; }
.project .tab { margin-left: 12px; }
.project .tab.active { margin-left: 57px; padding: 0 1px; gap: 10px; color: #b8b8b8; border-bottom: 2px solid #ccc; }
.info { display: flex; gap: 6px; padding: 7px 6px 0; height: 113px; font-size: 11px; line-height: 13px; color: #8f8f8f; }
.info strong { display: flex; align-items: center; gap: 7px; font-size: 12px; line-height: 12px; color: #ccc; font-weight: 400; }
.tri { border: 5px solid transparent; border-top-color: #fff; border-bottom: 0; }
.project .find { margin: 0 6px 7px 7px; }
.c1 { width: 16px; } .c2 { width: 169px; } .c3 { width: 21px; } .c4 { width: 77px; }
.items { font-size: 11px; color: #858585; }
.items thead { font-size: 13px; background: #2d2d2d; }
.items thead svg { margin-left: 4px; color: #b5b5b5; }
.items th { height: 19px; padding-left: 6px; border-right: 1px solid #1c1c1c; }
.items th:first-child, .items th:nth-child(3) { padding: 0; }
.items td { height: 19px; padding: 0; }
.items td:nth-child(4) { padding-left: 7px; }
.items td:nth-child(5) svg { margin-left: 22px; color: #b5b5b5; }
.items .swatch { margin-left: 6px; }
.items .active { background: #2b2b2b; }
.twist svg { margin-left: 2px; }
.entry { display: flex; align-items: center; height: 19px; color: #a8a8a8; white-space: pre; }
.entry span { flex: 1; padding-left: 3px; line-height: 18px; }
.active .entry span { background: #9c9c9c; color: #222; }
.projfoot { margin-top: auto; height: 20px; display: flex; align-items: center; color: #b2b2b2; font-size: 11px; border-top: 1px solid #161616; overflow: hidden; }
.projfoot button { width: 25px; }
.projfoot .bpc { width: 52px; color: #8f8f8f; border: solid #2a2a2a; border-width: 0 1px; }
.pill { flex: 1; height: 14px; margin-left: 2px; border-radius: 7px; background: #303030; }

.comp .tabs { padding-left: 8px; gap: 8px; color: #9a9a9a; }
.comp .x { width: 10px; }
.comp .tabs span { color: #2d74bd; }
.comp .tab { gap: 5px; }
.crumbs { height: 26px; padding: 3px 19px; border-bottom: 1px solid #1c1c1c; font-size: 13px; }
.crumbs button { width: 58px; height: 17px; padding-right: 12px; background: #191919; color: #2d74bd; }
.viewer { flex: 1; min-height: 0; display: flex; align-items: center; justify-content: center; }
.compfoot { display: flex; align-items: center; height: 24px; border-top: 1px solid #151515; padding-left: 279px; font-size: 13px; color: #b2b2b2; }
.compfoot button { width: 22px; height: 20px; }
.ghost { color: #444; margin-right: 1px; }
.compfoot .sel { height: 19px; margin: 0 1px; color: #a0a0a0; }
.s1 { width: 86px; } .s2 { width: 105px; } .s3 { width: 69px; }
.pressed { background: #161616; }
.compfoot .expo { width: 30px; font-size: 11px; color: #2d74bd; }

.side { display: flex; flex-direction: column; gap: 4px; min-height: 0; }
.head { display: flex; align-items: center; justify-content: space-between; height: 28px; padding: 0 22px 0 13px; font-size: 13px; color: #a8a8a8; }
.align { height: 139px; flex: none; }
.to { display: flex; align-items: center; gap: 4px; padding: 3px 15px 0 7px; font-size: 13px; line-height: 16px; color: #777; white-space: nowrap; }
.to .sel { flex: 1; height: 17px; color: #a0a0a0; }
.icons { display: flex; justify-content: space-between; margin: 8px 21px 0 11px; color: #b2b2b2; }
.icons + p { margin: 5px 15px 0 7px; border-top: 1px solid #2d2d2d; font-size: 13px; line-height: 20px; color: #777; }
.icons.off { color: #444; margin-top: 1px; }
.motion { flex: 1; border-bottom-left-radius: 4px; }
.start { justify-content: flex-start; gap: 10px; font-size: 12px; border-bottom: 1px solid #292929; }
.preset { display: flex; align-items: center; justify-content: space-between; padding: 2px 24px 0 4px; }
.preset .sel { width: 132px; height: 23px; }
.ease { display: flex; padding: 13px 0 0 10px; }
.rows { width: 166px; }
.row { display: flex; align-items: center; height: 26px; }
.row svg { color: #ccc; }
.row [type=range] { width: 104px; height: 16px; margin-left: 9px; }
[type=range] { background: linear-gradient(#484848, #484848) center / 100% 2px no-repeat; }
[type=range]::-webkit-slider-thumb { appearance: none; width: 14px; height: 14px; border: 2px solid #999; border-radius: 50%; background: #232323; }
.row [type=text] { width: 30px; height: 18px; margin-left: auto; padding-left: 4px; background: #191919; border: 1px solid #292929; }
.tools { display: flex; flex-direction: column; align-items: center; gap: 4px; width: 40px; padding-top: 3px; color: #b8b8b8; }
.tools .blue { color: #2d9be0; }
.tools .dim { color: #777; }
.grid { display: grid; grid-template-columns: 72px 70px 1fr; grid-auto-rows: 26px; padding: 6px 0 0 9px; font-size: 16px; font-weight: 500; color: #c4c4c4; }
.grid button { justify-content: flex-start; gap: 3px; }
.task { display: flex; gap: 9px; padding: 9px 13px 0 4px; font-size: 13px; }
.task .sel { width: 135px; height: 23px; }
.task > button { flex: 1; border: 1px solid #5a5a5a; }

.timeline { display: grid; grid-template: minmax(0, 1fr) 18px / 564px minmax(0, 1fr) 16px; border: 1px solid #2d5f99; border-left-width: 2px; background: #232323; min-height: 0; }
.left { border-right: 1px solid #111; min-width: 0; }
.timeline .tabs { height: 27px; padding-left: 28px; }
.timeline .tan { margin-left: 54px; }
.timeline .tan + .tab { margin-left: 14px; }
.timeline .tab.active { margin-left: 39px; border-bottom: 2px solid #ccc; }
.clock { display: flex; height: 36px; }
.time { width: 123px; text-align: center; color: #2d86dd; }
.time b { display: block; font-size: 15px; line-height: 24px; font-weight: 500; }
.time small { display: block; font: 10px/8px "Liberation Mono", monospace; color: #1f4f80; }
.clock .find { width: 260px; margin-top: 9px; }
.modes { display: flex; gap: 10px; margin: 9px 14px 0 auto; color: #b2b2b2; }
.modes svg:last-child { margin-left: 9px; }
.l1 { width: 69px; } .l2 { width: 32px; } .l3 { width: 33px; } .l4 { width: 160px; } .l5 { width: 137px; }
.layers { font-size: 13px; color: #9a9a9a; }
.layers th, .layers td { height: 20px; }
.layers thead { background: #2d2d2d; }
.layers th { height: 19px; border-right: 1px solid #1c1c1c; color: #8a8a8a; }
.layers th:nth-child(5), .layers th:last-child { border: 0; }
.layers tbody tr { background: #2d2d2d; border-bottom: 1px solid #3a3a3a; }
.layers tbody tr.active { background: #484848; border-bottom: 1px solid #303030; }
.sw { display: flex; gap: 2px; padding-left: 6px; color: #b8b8b8; }
.sw span { width: 13px; }
.sw i { width: 13px; height: 13px; background: #383838; }
.tagcell svg { margin-left: 12px; color: #b8b8b8; }
.layers .num { padding-left: 7px; font: 700 12px "Liberation Serif", serif; }
.layers .lname, .layers .parent { padding-left: 6px; }
.mark { display: flex; align-items: center; gap: 4px; padding-left: 2px; }
.mark i { width: 15px; height: 15px; }
.name { display: flex; align-items: center; height: 19px; padding-left: 3px; }
.name i { width: 16px; height: 16px; background: #fff; }
.name span { flex: 1; padding-left: 6px; font-size: 12px; line-height: 19px; color: #b5b5b5; }
.active .name span { background: #9c9c9c; color: #222; padding-left: 4px; margin-left: 2px; }
.switches { display: flex; align-items: center; gap: 1px; padding-left: 4px; color: #b2b2b2; }
.switches i { width: 14px; height: 14px; background: #333; }
.switches .first { margin-left: 31px; }
.link { display: flex; align-items: center; gap: 5px; padding-left: 4px; }
.link .sel { width: 90px; height: 18px; }

.right { position: relative; min-width: 0; padding: 33px 8px 0 7px; display: flex; flex-direction: column; }
.navbar, .work { position: relative; height: 8px; background: #666; flex: none; }
.navbar::before, .work::before, .navbar i, .work i { content: ""; position: absolute; top: 0; bottom: 0; left: -6px; width: 6px; background: #2d86dd; border-radius: 4px 0 0 4px; }
.navbar i, .work i { left: 100%; border-radius: 0 4px 4px 0; }
.ruler { display: flex; height: 22px; border: solid #141414; border-width: 1px 0; font: 12px/18px "Liberation Serif", serif; color: #a8a8a8; flex: none; margin-right: -8px; padding-right: 8px; }
.ruler span { flex: 1; width: 0; display: flex; justify-content: center; background: linear-gradient(#777, #777) left bottom / 1px 5px no-repeat; }
.ruler em { font-style: normal; flex: none; transform: translateX(-50%); margin-right: auto; }
.ruler span:first-child em { transform: none; }
.ruler .last { flex: none; width: 1px; }
.work { height: 14px; background: #606060; }
.cache { height: 5px; background: #2f9a3e; border: solid #0b2e10; border-width: 2px 0 1px; flex: none; }
.tracks { flex: 1; min-height: 0; display: flex; flex-direction: column; margin-right: -8px; background: #2a2a2a; }
.track { height: 20px; padding: 1px 8px 3px 0; background: #2f2f2f; flex: none; }
.track.active { background: #484848; }
.track div { height: 100%; background: #80403a; box-shadow: 0 0 0 1px #5a3c3a; }
.track.active div { background: linear-gradient(#a7a5c4, #8886aa); box-shadow: 0 0 0 1px #5e6070; }
.rest { flex: 1; margin-right: 8px; background: linear-gradient(90deg, #505050 22px, #313131 22px); }
.right .head { position: absolute; left: 1px; top: 47px; padding: 0; height: 15px; }
.needle { position: absolute; left: 7px; top: 60px; bottom: 0; width: 1px; background: #2d86dd; }
.gutter { padding-top: 64px; display: flex; flex-direction: column; gap: 5px; color: #b2b2b2; }
.tlfoot { grid-column: 1 / -1; display: flex; align-items: center; border-top: 1px solid #161616; padding-left: 6px; font-size: 13px; gap: 6px; color: #a8a8a8; }
.blue { color: #2d74bd; }
.toggle { width: 133px; height: 16px; margin: 0 136px 0 232px; color: #777; background: #1f1f1f; border: solid #2a2a2a; border-width: 0 1px; }
.tlfoot [type=range] { width: 50px; height: 12px; margin: 0 4px 0 4px; }
.tlfoot [type=range]::-webkit-slider-thumb { width: 10px; height: 10px; }

.menu { position: absolute; display: flex; flex-direction: column; background: #f1f1f1; color: #1c1c1c; border: 1px solid #ccc; padding: 2px 1px 0; box-shadow: 3px 3px 3px #0007; }
.context { left: 244px; top: 278px; width: 189px; height: 539px; }
.fly { left: 431px; top: 659px; width: 181px; height: 107px; }
.menu button { flex: 1; min-height: 0; justify-content: space-between; padding: 0 4px 0 27px; font-size: 12px; }
.fly button { padding-left: 26px; }
.menu svg { color: #444; }
.menu kbd { font: inherit; margin-right: 11px; }
.menu .off { color: #838383; }
.menu .on { background: #90c5f6; }
.menu .hover { background: #e6e6e6; }
.menu hr { height: 5px; margin-left: 24px; border: solid transparent; border-width: 2px 0; background: #d4d4d4; background-clip: padding-box; }
.spot { position: absolute; left: 452px; top: 662px; width: 59px; height: 59px; border-radius: 50%; background: #f2e800; mix-blend-mode: multiply; }
.cursor { position: absolute; left: 480px; top: 691px; }

.brand { position: absolute; left: 55px; bottom: 38px; display: flex; gap: 11px; color: #fff; }
.words { width: 416px; }
.line1 { display: flex; justify-content: space-between; align-items: flex-end; height: 54px; line-height: 42px; padding-bottom: 16px; }
.org, .motto, .brand p, .promo p { text-align: justify; text-align-last: justify; }
.org { width: 266px; font-size: 38px; }
.motto { width: 113px; font-size: 26px; line-height: 30px; }
.brand hr { height: 5px; border: 0; background: #fff; }
.brand p { font-size: 26px; line-height: 56px; height: 41px; }
.caption { position: absolute; left: 729px; bottom: 45px; width: 460px; height: 68px; background: #3b3b3b; color: #fff; font-size: 49px; line-height: 66px; text-align: center; white-space: nowrap; font-weight: 500; }
.promo { position: absolute; right: 55px; bottom: 30px; width: 429px; color: #fff; font-size: 26px; }
.promo p { line-height: 40px; }
.promo div { height: 37px; background: #acacac; color: #b80000; display: flex; justify-content: center; font-size: 28px; line-height: 38px; font-weight: 700; }
.promo div span { width: 120px; text-align-last: justify; }
.promo .store { display: flex; justify-content: space-between; text-align-last: auto; white-space: nowrap; }
.store b { font-size: 29px; }
.store .latin { font-size: 34px; font-weight: 600; }
.store span { width: 119px; white-space: normal; text-align-last: justify; }
.water { position: absolute; left: 940px; bottom: 6px; display: flex; align-items: center; gap: 2px; color: #777; font-size: 13px; }
</style>
